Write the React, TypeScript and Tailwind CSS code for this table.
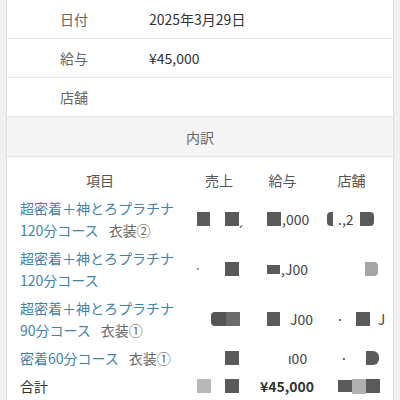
const FONT = "font-['Noto_Sans_CJK_JP','Noto_Sans',sans-serif]";

type Mark = { gap: number; w: number; h?: number; tone?: string; text?: string; bold?: boolean };

// redaction blocks laid over the amount cells
const Marks = ({ items }: { items: Mark[] }) => (
  <div className="flex h-full items-center">
    {items.map((m, i) =>
      m.text ? (
        <span
          key={i}
          style={{ marginLeft: m.gap }}
          className={m.bold ? "font-bold text-[#333]" : "text-[#444]"}
        >
          {m.text}
        </span>
      ) : (
        <span
          key={i}
          style={{ marginLeft: m.gap, width: m.w, height: m.h ?? 14 }}
          className={"inline-block " + (m.tone ?? "bg-[#5a5a5a]")}
        />
      ),
    )}
  </div>
);

type Row = {
  name: string;
  line2?: string;
  costume?: string;
  total?: boolean;
  sales: Mark[];
  pay: Mark[];
  shop: Mark[];
};

const ROWS: Row[] = [
  {
    name: "超密着＋神とろプラチナ",
    line2: "120分コース",
    costume: "衣装②",
    sales: [
      { gap: 4, w: 13 },
      { gap: 15, w: 14 },
      { gap: 0, w: 0, text: "ˏ" },
    ],
    pay: [
      { gap: 22, w: 14 },
      { gap: 1, w: 0, text: ",000" },
    ],
    shop: [
      { gap: 7, w: 6, tone: "bg-[#5a5a5a] rounded-l" },
      { gap: 5, w: 0, text: ".,2" },
      { gap: 6, w: 14, tone: "bg-[#5a5a5a] rounded-r" },
    ],
  },
  {
    name: "超密着＋神とろプラチナ",
    line2: "120分コース",
    sales: [
      { gap: 4, w: 2, h: 2, tone: "bg-[#999]" },
      { gap: 26, w: 14 },
    ],
    pay: [
      { gap: 22, w: 13, h: 9 },
      { gap: 1, w: 0, text: ",J00" },
    ],
    shop: [{ gap: 45, w: 13, tone: "bg-[#a5a5a5] rounded-r" }],
  },
  {
    name: "超密着＋神とろプラチナ",
    line2: "90分コース",
    costume: "衣装①",
    sales: [
      { gap: 18, w: 15, tone: "bg-[#555] rounded-l" },
      { gap: 0, w: 14, tone: "bg-[#6b6b6b]" },
    ],
    pay: [
      { gap: 22, w: 13 },
      { gap: 10, w: 0, text: "J00" },
    ],
    shop: [
      { gap: 16, w: 0, text: "·" },
      { gap: 12, w: 14 },
      { gap: 8, w: 0, text: "J" },
    ],
  },
  {
    name: "密着60分コース",
    costume: "衣装①",
    sales: [{ gap: 32, w: 14 }],
    pay: [{ gap: 43, w: 0, text: "ı00" }],
    shop: [
      { gap: 20, w: 0, text: "·" },
      { gap: 18, w: 13, tone: "bg-[#5a5a5a] rounded-r-md" },
    ],
  },
  {
    name: "合計",
    total: true,
    sales: [
      { gap: 4, w: 14, tone: "bg-[#b8b8b8]" },
      { gap: 14, w: 14 },
    ],
    pay: [{ gap: 15, w: 0, text: "¥45,000", bold: true }],
    shop: [
      { gap: 18, w: 14, h: 12 },
      { gap: 0, w: 14, h: 15, tone: "bg-[#b0b0b0]" },
      { gap: 0, w: 14 },
    ],
  },
];

const InfoRow = ({ label, value }: { label: string; value?: string }) => (
  <div className="flex h-[39px] items-center border-b border-[#e6e6e6]">
    <span className="ml-[53px] w-[89px] text-[#666]">{label}</span>
    <span className="text-[#333]">{value}</span>
  </div>
);

const App = () => {
  return (
    <div className={"h-[400px] w-[400px] overflow-hidden bg-[#f0f0f0] text-[14px] leading-[22px] " + FONT}>
      <div className="mx-[6px] h-full border-x border-[#e2e2e2] bg-white">
        <InfoRow label="日付" value="2025年3月29日" />
        <InfoRow label="給与" value="¥45,000" />
        <InfoRow label="店舗" />
        <div className="flex h-[40px] items-center justify-center border-b border-[#e2e2e2] bg-[#f5f5f5] text-[#666]">
          内訳
        </div>
        <div className="pt-[9px]">
          <div className="grid grid-cols-[186px_52px_75px_63px] py-[3px] text-[#555]">
            <div className="text-center">項目</div>
            <div className="text-center">売上</div>
            <div className="text-center">給与</div>
            <div className="text-center">店舗</div>
          </div>
          {ROWS.map((r, i) => (
            <div key={i} className="grid grid-cols-[186px_52px_75px_73px] py-[3px]">
              {r.total ? (
                <div className="pl-[13px] text-[#333]">{r.name}</div>
              ) : (
                <div className="pl-[13px] text-[#3d83aa]">
                  <div>
                    {r.name}
                    {!r.line2 && r.costume && (
                      <span className="ml-[10px] text-[#666]">{r.costume}</span>
                    )}
                  </div>
                  {r.line2 && (
                    <div>
                      {r.line2}
                      {r.costume && <span className="ml-[10px] text-[#666]">{r.costume}</span>}
                    </div>
                  )}
                </div>
              )}
              <Marks items={r.sales} />
              <Marks items={r.pay} />
              <Marks items={r.shop} />
            </div>
          ))}
        </div>
      </div>
    </div>
  );
};

export default App;
